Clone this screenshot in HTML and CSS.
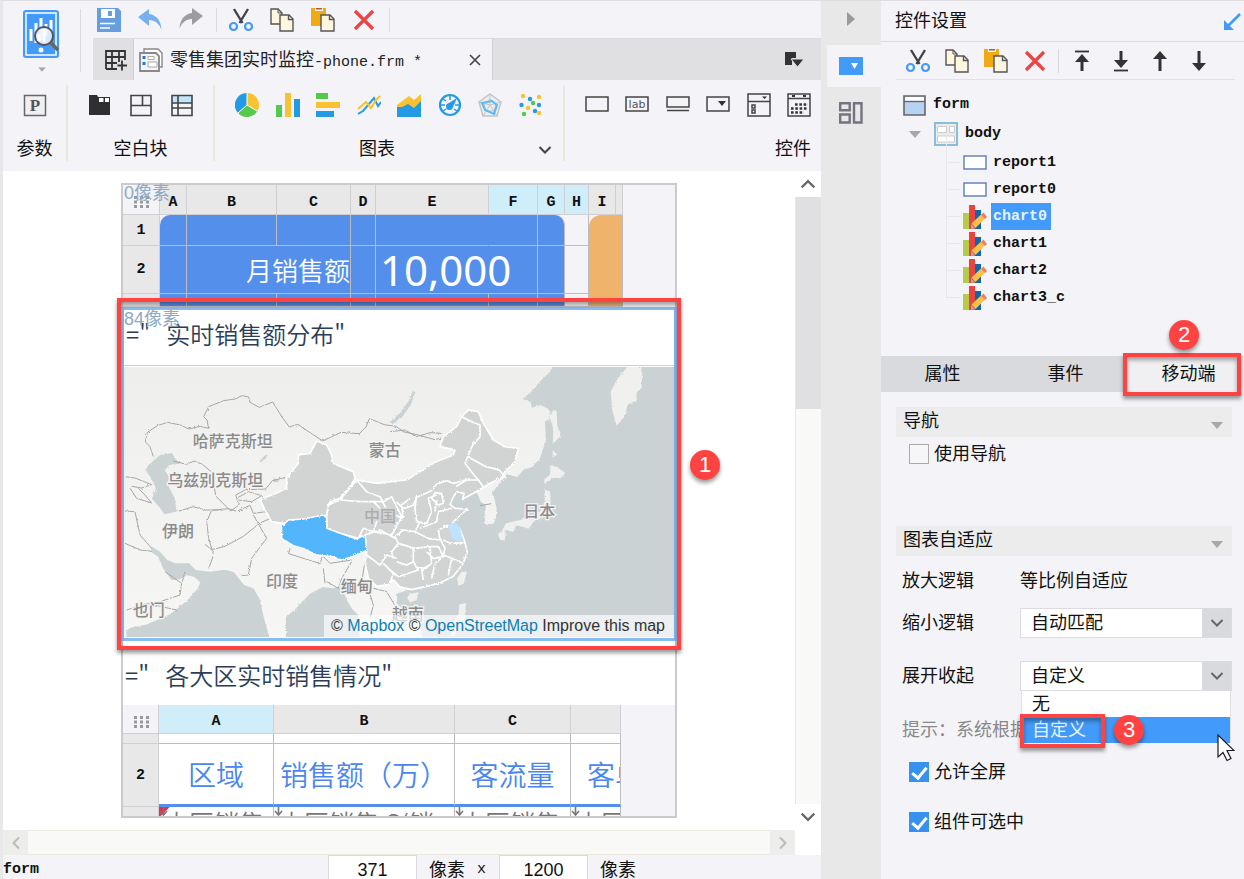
FILE: index.html
```html
<!DOCTYPE html>
<html lang="zh-CN">
<head>
<meta charset="utf-8">
<title>零售集团实时监控-phone.frm</title>
<link rel="stylesheet" href="styles.css">
</head>
<body>
<svg class="sprite" aria-hidden="true">
  <symbol id="i-cut" viewBox="0 0 24 24">
    <path d="M5 1l8.500 14M19 1l-8.500 14" stroke="#444" stroke-width="2.400" fill="none"/>
    <circle cx="4.500" cy="18.500" r="3.500" fill="none" stroke="#429afa" stroke-width="2.200"/>
    <circle cx="19.500" cy="18.500" r="3.500" fill="none" stroke="#429afa" stroke-width="2.200"/>
  </symbol>
  <symbol id="i-copy" viewBox="0 0 24 24">
    <path d="M1 1h7l4 4v11H1z" fill="#fff6e0" stroke="#555" stroke-width="1.400"/><path d="M8 1v4h4" fill="none" stroke="#555"/>
    <path d="M10 7h9l4 4v12H10z" fill="#fff6e0" stroke="#555" stroke-width="1.400"/><path d="M18.500 7v4.500H23" fill="none" stroke="#555" stroke-width="1.400"/>
  </symbol>
  <symbol id="i-paste" viewBox="0 0 24 24">
    <path d="M0 0h15v18H0z" fill="#f0aa14"/><path d="M4 0h8v3H4z" fill="#fff"/><path d="M5 0h6v1.500H5z" fill="#c4512a"/>
    <path d="M10 7h9l4 4v12H10z" fill="#fff6e0" stroke="#555" stroke-width="1.400"/><path d="M18.500 7v4.500H23" fill="none" stroke="#555" stroke-width="1.400"/>
  </symbol>
  <symbol id="i-del" viewBox="0 0 24 24"><path d="M3 3l18 18M21 3L3 21" stroke="#ec4343" stroke-width="3.200" fill="none"/></symbol>
  <symbol id="i-chart" viewBox="0 0 24 24">
    <path d="M0 8h6v16H0z" fill="#b4cb4c"/><path d="M6 0h6v24H6z" fill="#e9443e"/><path d="M12 5h6v19h-6z" fill="#1166ad"/>
    <path d="M8 24v-5l4 4.500z" fill="#a9acb5"/>
    <path d="M8.500 18.500L18 9.500l4 4L12.500 23z" fill="#fbc14c"/><path d="M18 10l2.500-2.500 3.500 4.500-2 2z" fill="#ef7f5c"/>
  </symbol>
  <symbol id="i-down" viewBox="0 0 14 10"><path d="M1.500 2L7 7.500 12.500 2" fill="none" stroke="currentColor" stroke-width="2"/></symbol>
  <symbol id="i-tri" viewBox="0 0 12 7"><path d="M0 0h12L6 7z" fill="#a8a8aa"/></symbol>
  <symbol id="i-grip" viewBox="0 0 16 12"><path d="M1 0h3v3H1zM7 0h3v3H7zM13 0h3v3h-3zM1 4.500h3v3H1zM7 4.500h3v3H7zM13 4.500h3v3h-3zM1 9h3v3H1zM7 9h3v3H7zM13 9h3v3h-3z" fill="#999"/></symbol>
  <symbol id="i-grow" viewBox="0 0 9 9"><path d="M4.500 0v7M1 4l3.500 4L8 4" fill="none" stroke="#777" stroke-width="1.600"/></symbol>
</svg>

<div class="app">
<main class="work">
  <header class="head">
    <button class="brand" aria-label="预览">
      <svg width="37" height="49" viewBox="0 0 37 49"><rect width="36" height="48" rx="3" fill="#429afa"/><rect x="3" y="3" width="30" height="42" fill="none" stroke="#fff" stroke-width="1.500"/><path d="M8 19v12M13 13v20M18 8v22M23 14v12M28 10v12" stroke="#fff" stroke-width="3"/><circle cx="18" cy="40" r="2.500" fill="#fff"/><circle cx="21" cy="26" r="9" fill="#eaf3ff" fill-opacity=".9" stroke="#555" stroke-width="2"/><path d="M21 19v13M16 24v7" stroke="#fff" stroke-width="3"/><path d="M28 33l7 7" stroke="#666" stroke-width="3.500"/></svg>
      <svg class="brand-more" width="8" height="5" viewBox="0 0 12 7"><use href="#i-tri"/></svg>
    </button>
    <div class="head-main">
      <div class="quick">
        <div class="quick-group">
          <button class="ico" aria-label="保存"><svg viewBox="0 0 24 24"><path d="M0 0h21l3 3v21H0z" fill="#669fe0"/><path d="M4 1h14v9H4z" fill="#fff"/><path d="M11 3h4v5h-4z" fill="#669fe0"/><path d="M3 15.500h15M3 20h10" stroke="#fff" stroke-width="1.500"/></svg></button>
          <button class="ico" aria-label="撤销"><svg viewBox="0 0 24 24"><path d="M0 9l11-8v5c8 1 12 7 12.500 16C21 15 17 12.500 11 12v6z" fill="#77b0ee"/></svg></button>
          <button class="ico" aria-label="重做"><svg viewBox="0 0 24 24"><path d="M24 8L13 0v5C5 6 1 12 .5 21 3 14 7 11.500 13 11v6z" fill="#9d9d9f"/></svg></button>
        </div>
        <div class="quick-group">
          <button class="ico" aria-label="剪切"><svg><use href="#i-cut"/></svg></button>
          <button class="ico" aria-label="复制"><svg><use href="#i-copy"/></svg></button>
          <button class="ico" aria-label="粘贴"><svg><use href="#i-paste"/></svg></button>
          <button class="ico" aria-label="删除"><svg><use href="#i-del"/></svg></button>
        </div>
      </div>
      <nav class="files">
        <button class="newfile" aria-label="新建"><svg width="22" height="22" viewBox="0 0 22 22"><path d="M1 20V2h19v9M1 8h19M1 14h11M1 20h11M7 2v18M14 2v11M12.500 16.500H22M17 11.500v10" fill="none" stroke="#333" stroke-width="1.800"/></svg></button>
        <div class="file">
          <svg width="24" height="24" viewBox="0 0 24 24"><path d="M5 5V1h14l4 4v14h-3" fill="#fff" stroke="#888" stroke-width="1.400"/><path d="M1 5h16l3 3v15H1z" fill="#f4f4f6" stroke="#888" stroke-width="1.800"/><path d="M3.500 8h3v3h-3zM3.500 14h3v3h-3z" fill="#2478d0"/><path d="M9 8.500h6v3H9zM9 14h9v5H9z" fill="#fff" stroke="#aaa"/></svg>
          <span class="file-name">零售集团实时监控<span class="mono">-phone.frm *</span></span>
          <button class="close" aria-label="关闭"><svg width="12" height="12" viewBox="0 0 12 12"><path d="M1 1l10 10M11 1L1 11" stroke="#444" stroke-width="1.600"/></svg></button>
        </div>
        <button class="filelist" aria-label="文件列表"><svg width="19" height="16" viewBox="0 0 19 16"><path d="M0 0h11v6H7v7H0z" fill="#333"/><path d="M6 7h13l-6.500 8z" fill="#333" stroke="#e0e0e2"/></svg></button>
      </nav>
    </div>
  </header>

  <section class="ribbon">
    <div class="rgroup params">
      <div class="rtools"><button class="ico" aria-label="参数"><svg viewBox="0 0 24 24"><rect x="1.500" y="2.500" width="21" height="20" fill="#f0f0f2" stroke="#666" stroke-width="1.500"/><text x="12" y="18" class="p-glyph">P</text></svg></button></div>
      <div class="rlabel">参数</div>
    </div>
    <div class="rgroup blocks">
      <div class="rtools">
        <button class="ico" aria-label="报表块"><svg viewBox="0 0 24 24"><path d="M1 2h8l1 2h12v18H1z" fill="#2f2f31"/><path d="M11 5h4.500v4H11zM17 5h4v4h-4z" fill="#fff"/></svg></button>
        <button class="ico" aria-label="绝对画布块"><svg viewBox="0 0 24 24"><path d="M2 2.500h20v20H2zM2 12.500h20M13.500 2.500v10" fill="none" stroke="#444" stroke-width="1.600"/></svg></button>
        <button class="ico" aria-label="tab块"><svg viewBox="0 0 24 24"><path d="M2 3h20v7H2z" fill="#bfe6fa"/><path d="M2 2.500h20v20H2zM2 10h20M2 15h20M8 2.500v20" fill="none" stroke="#444" stroke-width="1.600"/></svg></button>
      </div>
      <div class="rlabel">空白块</div>
    </div>
    <div class="rgroup charts">
      <div class="rtools">
        <button class="ico" aria-label="饼图"><svg viewBox="0 0 24 24"><path d="M12 12V0a12 12 0 0 1 10.400 18z" fill="#f9c232"/><path d="M12 12l10.400 6A12 12 0 0 1 3 20z" fill="#54c94b"/><path d="M12 12l-9 8A12 12 0 0 1 12 0z" fill="#229ae4"/><path d="M12 0v12l10 6M12 12l-9 8" stroke="#fff" fill="none"/></svg></button>
        <button class="ico" aria-label="柱形图"><svg viewBox="0 0 24 24"><path d="M0 12h6v12H0z" fill="#54c94b"/><path d="M9 0h6v24H9z" fill="#f9c232"/><path d="M18 6h6v18h-6z" fill="#229ae4"/></svg></button>
        <button class="ico" aria-label="条形图"><svg viewBox="0 0 24 24"><path d="M0 0h12v6H0z" fill="#54c94b"/><path d="M0 9h24v6H0z" fill="#f9c232"/><path d="M0 18h18v6H0z" fill="#229ae4"/></svg></button>
        <button class="ico" aria-label="折线图"><svg viewBox="0 0 24 24"><path d="M1 21l5-3 11-13 4 8 3-4" fill="none" stroke="#229ae4" stroke-width="2"/><path d="M1 16l8-7 5 6 5-8 4-4" fill="none" stroke="#f9c232" stroke-width="2"/></svg></button>
        <button class="ico" aria-label="面积图"><svg viewBox="0 0 24 24"><path d="M0 12l12-9 5 4 7-6v15H0z" fill="#f9c232"/><path d="M0 14h5l6-3 6 4 7-7v16H0z" fill="#229ae4"/></svg></button>
        <button class="ico" aria-label="仪表盘"><svg viewBox="0 0 24 24"><circle cx="12" cy="12" r="10" fill="none" stroke="#229ae4" stroke-width="2.200"/><path d="M12 2v5M3 12h4M17 12h4M5 6l3 2M5 18l3-2M19 18l-3-2" stroke="#229ae4" stroke-width="1.500"/><path d="M19 5l-4 9a3.500 3.500 0 1 1-4-4z" fill="#229ae4"/></svg></button>
        <button class="ico" aria-label="雷达图"><svg viewBox="0 0 24 24"><path d="M12 1l11 8-4 14H5L1 9z" fill="#eee" stroke="#c4c4c8" stroke-width="1.500"/><path d="M12 6l6 5-2 7H8l-2-7zM12 1v11l11-3M12 12l7 11M12 12L5 23M12 12L1 9" fill="none" stroke="#c4c4c8"/><path d="M4 10l10-2 5 4-3 9-9-4z" fill="none" stroke="#5bb9f5" stroke-width="2"/></svg></button>
        <button class="ico" aria-label="散点图"><svg viewBox="0 0 24 24"><g fill="#f9c232"><circle cx="4" cy="3" r="2.200"/><circle cx="20" cy="4" r="2.200"/><circle cx="9" cy="15" r="2.200"/><circle cx="20" cy="20" r="2.200"/></g><g fill="#229ae4"><circle cx="11" cy="6" r="2.200"/><circle cx="2.500" cy="12" r="2.200"/><circle cx="20" cy="12" r="2.200"/><circle cx="16" cy="18" r="2.200"/></g><g fill="#54c94b"><circle cx="14" cy="10" r="2.200"/><circle cx="5" cy="21" r="2.200"/></g></svg></button>
      </div>
      <div class="rlabel">图表</div>
      <button class="rmore" aria-label="更多图表"><svg width="14" height="10"><use href="#i-down"/></svg></button>
    </div>
    <div class="rgroup widgets">
      <div class="rtools">
        <button class="ico" aria-label="文本框"><svg viewBox="0 0 24 24"><path d="M1 4h22v14H1z" fill="none" stroke="#444" stroke-width="1.500"/></svg></button>
        <button class="ico" aria-label="标签"><svg viewBox="0 0 24 24"><path d="M1 4h22v14H1z" fill="none" stroke="#444" stroke-width="1.500"/><text x="12" y="15" class="lab-glyph">lab</text></svg></button>
        <button class="ico" aria-label="按钮"><svg viewBox="0 0 24 24"><path d="M1 4h22v10H1zM1 17.500h22" fill="none" stroke="#444" stroke-width="1.500"/></svg></button>
        <button class="ico" aria-label="下拉框"><svg viewBox="0 0 24 24"><path d="M1 4h22v14H1z" fill="none" stroke="#444" stroke-width="1.500"/><path d="M12 8h8l-4 5z" fill="#333"/></svg></button>
        <button class="ico" aria-label="下拉复选框"><svg viewBox="0 0 24 24"><path d="M1 1h22v22H1zM1 8.500h22M5 12h3v3H5zM5 17h3v3H5z" fill="none" stroke="#444" stroke-width="1.500"/><path d="M15 3.500h5L17.500 6z" fill="#333"/></svg></button>
        <button class="ico" aria-label="日期"><svg viewBox="0 0 24 24"><path d="M1 1h22v22H1zM1 5.500h22" fill="none" stroke="#444" stroke-width="1.500"/><path d="M8 11.500h13M4 15.500h17M4 19.500h13" stroke="#333" stroke-width="2.600" stroke-dasharray="2.600 1.700"/><path d="M5 2h3v2H5zM16 2h3v2h-3z" fill="#333"/></svg></button>
      </div>
      <div class="rlabel">控件</div>
    </div>
  </section>

  <div class="stage">
    <div class="canvas">
      <div class="form">
        <section class="sheet">
          <span class="px-tag">0像素</span>
          <table class="grid grid-a">
            <colgroup><col class="w37"><col class="w27"><col class="w90"><col class="w74"><col class="w25"><col class="w113"><col class="w49"><col class="w27"><col class="w24"><col class="w27"><col class="w7"></colgroup>
            <thead><tr><th class="corner"><svg width="16" height="12"><use href="#i-grip"/></svg></th><th>A</th><th>B</th><th>C</th><th>D</th><th>E</th><th class="on">F</th><th class="on">G</th><th class="on">H</th><th>I</th><th></th></tr></thead>
            <tbody>
              <tr class="r1"><th>1</th><td class="blue tl"></td><td class="blue"></td><td class="blue"></td><td class="blue"></td><td class="blue flat"></td><td class="blue"></td><td class="blue tr"></td><td></td><td class="orange tl2"></td><td class="orange"></td></tr>
              <tr class="r2"><th>2</th><td class="blue"></td><td class="blue kpi-name" colspan="2">月销售额</td><td class="blue"></td><td class="blue kpi" colspan="2">10,000</td><td class="blue"></td><td></td><td class="orange"></td><td class="orange"></td></tr>
              <tr class="r3"><th></th><td class="blue"></td><td class="blue"></td><td class="blue"></td><td class="blue"></td><td class="blue"></td><td class="blue"></td><td class="blue"></td><td></td><td class="orange"></td><td class="orange"></td></tr>
            </tbody>
          </table>
        </section>

        <section class="mapbox">
          <span class="px-tag">84像素</span>
          <h2 class="formula">="   实时销售额分布"</h2>
          <div class="map">
            <svg viewBox="42 36 1650 810" role="img" aria-label="地图">
              <defs><filter id="rough" x="-5%" y="-5%" width="110%" height="110%"><feTurbulence type="fractalNoise" baseFrequency=".14" numOctaves="2" seed="4"/><feDisplacementMap in="SourceGraphic" scale="8"/></filter>
              <linearGradient id="relief" x2="0" y2="1"><stop offset="0" stop-color="#eeeeed"/><stop offset=".3" stop-color="#f1f1f0"/><stop offset="1" stop-color="#f6f6f5"/></linearGradient></defs>
              <rect x="42" y="36" width="1650" height="810" fill="url(#relief)"/>
              <g filter="url(#rough)">
                <g fill="#cad2d3">
                  <path d="M1332 20L1320 50 1285 85 1275 100 1238 132 1262 140 1265 158 1290 150 1312 160 1322 172 1318 190 1305 200 1308 255 1290 310 1268 335 1240 345 1222 366 1190 358 1180 372 1160 395 1147 415 1152 428 1160 460 1158 490 1150 506 1125 508 1124 470 1128 452 1112 440 1104 420 1095 405 1065 430 1055 435 1064 415 1040 410 1028 430 1020 450 1035 458 1072 460 1050 480 1028 500 1050 520 1065 560 1072 590 1060 622 1045 645 1020 665 990 682 950 692 905 700 875 712 862 715 860 745 885 770 925 790 940 860 1720 860V20z"/>
                  <path d="M106 345l10-15 34-30 36-6 8 14 16 18-32 4-14 16 12 18-2 26 20 40 6 40-36 8-16-22-22-25 12-30-15-32z"/>
                  <path d="M122 574l28 16 22 25 23 10 42 0 20 20 43 5 46-6 26 8 30 38 28 10 18 30 14 60 20 70H160l-8-14-100 16-4-34 14-10 50-10 68-30 50-40 34-38 7-18-18-16-22-6-18 12-28 4-26-36-14-34-20-14z"/>
                  <path d="M528 860v-74l24-20 48-50 38-20 30 4 24-5 22 46 12 20 18 18 6 81z"/>
                  <path d="M840 202l30-28 26-36 12-30 8 4-14 38-24 34-30 24zM448 320l10-14 14-8-4 12-16 12zM490 370l18 4-4 8-14-2z"/>
                </g>
                <g fill="#f0f0ef">
                  <path d="M1552 36h42l2 34-2 30-14 12v24l-26 12-10 34-24 30-12-42-6-60 20-38zM1330 165l10 4 2 44 12 28-26 26 2-36-4-30-8-12zM1328 285l14 14-14 8zM1322 330l20 6 24 18-14 16-22-2-26 18-2-12 18-16zM1305 405l15 4 2 36-12 34-20 12-20 10-14 20-18-6-20-4-8 20-20-6-16 6 14-26 42-10 38-10 26-20 10-26zM1170 530l18 0-4 26-12 0-7-14zM1055 650l16 0-10 36-16 6-4-22zM1048 748l20-4-4 48-20 10-8 40h-14l8-40 16-26zM900 716l26-4-6 24-20 6-9-14z"/>
                </g>
                <g fill="none" stroke="#a6a6a6" stroke-width="3">
                  <path d="M130 305l-10-30-14-15 6-28 30-20 30-10 40 8 24 12 35-8 25 6-5-25-10-10 15-30 45-18 35-5 20-10 20 4 4 16 28 15 40-16 28 45 22 30 25-8 45 30 30 20 55-26 55 4 20-20 10-25 45 18 35 5 22 16 45 10 50 14 55-16"/>
                  <path d="M190 318l40 10 22-10 25 10 30 25 10 70 45 45 25-18-10-30 30-16 60-2 20-25 40-10M340 465l-55 0-35-10-45 14M290 500l6 50 15 50-15 40M290 500l15-34 50-5 25 8 40-18 10 24 40-5 25 14-45 20-50 40-55 30-40 10-20-16M380 430l35-20 40 12-30 18-40-5M430 480l40 70-45 60-10 50-20 2M45 365l30 4 50 20-30 10-30-5M60 400l20 30 45 14-20-24-20-20M45 468l30 2 15 70 35 40M45 565l45 20 36 4M165 650l50 35-5 35-60 20M50 765l60-20 90 20M225 650l-8 30M540 580l-4 16 95 30 5-20M640 605l20 20 65-10M640 640l5 45M725 620l-30 50-10 30-35-20M765 620l-10 60 20 20 15 50-10 40M790 700l40 10 30 50M840 230l45-5 35 20 40-12 35 2M1110 452l34-6"/>
                </g>
                <g fill="#d2d3d3" stroke="#fff" stroke-width="5" stroke-linejoin="round">
                  <path d="M740 375l60 10 60-7 30-3 40-25 45-28 55-22 5-15-45-10 10-30 40-30 15-30 20-20 30 5 15 35 30 50 35 20 40 5-10 40-30 30-10 18-35 17-22 13-28 17-32 18 4-18-22-5-12 20-8 18 15 12 37 2-22 20-22 20 22 20 15 40 7 30-14 36-28 36-40 20-40 10-45 10-35-8-20-22-15 15-35 5-25-25-10-45 5-35-5-45-75-5-40-15 5-70 35-20 30-35z"/>
                  <path d="M620 258l30 12 15 30 3 25 62 25 5 20-15 25-30 35-30 10-10 40-70 12-60 14-35-6-17-30-18-36 50-20 30-14 0-30 35-45 0-25 35-5z"/>
                  <path d="M650 480l5-30 35-15 60 5 40 0 25 25-15 35-10 30-30-10-15 30-55-15-40-15z"/>
                </g>
                <path d="M1015 510l18-8 18 18 8 32-16 8-18-12-6-22z" fill="#bfe3ff"/>
                <path d="M515 515l20-20 45-3 60-12 10 10v30l40 15 50 17 25-12 5 45-30 15-45 15-25-10-50-5-40-20-30-8-35-22z" fill="#53b6fc" stroke="#fff" stroke-width="4"/>
                <g fill="none" stroke="#fff" stroke-width="5" stroke-linejoin="round">
                  <path d="M1055 185l30 15 25 10 0 35-22 25-15 35 55 30 40 10 20 25M1073 305l-8 20 15 20 25 30 15 20M1080 370l-30 10-20 5-20-8-30 10-15 20-45 20-10 24-30 10-20-20M1110 375l-40 0-32 20"/>
                  <path d="M740 375l30 35 40 15 20 40 20 30 10 20-15 25-55-10M790 440l30 0 25-15 30 60-10 20-20-5M830 470l50 20-5-40 25-20M920 420l-5 40 5 40 30 5 15-35-10-40 25-10M965 430l20 20 15-5-5-30-20-2-10 17M985 470l40-10M985 470l-5 30-50 20M930 500l-15 30 40 20 35 5-5-30 30-15M915 530l-35-5-25 20 10 20-20 25 5 20M865 565l50 15 45-5 25 0 15 30-30 5-20-20M910 580l0 40-20 10-30-10M960 575l5 50-20 15-30-5M1000 555l20 10 40-2M990 550l15 30-5 20 25 10 35 15M1000 605l-25 20-10 45M1025 610l-10 50M965 625l-30 20 5 30M910 620l15 25-60 20-25-20M770 600l40 30 20-30 30 10M820 625l30 30-10 30M765 540l45-15 45 25M975 470l5-35"/>
                </g>
              </g>
              <g class="places">
                <text x="248" y="277">哈萨克斯坦</text><text x="172" y="394">乌兹别克斯坦</text><text x="156" y="546">伊朗</text>
                <text x="468" y="697">印度</text><text x="692" y="711">缅甸</text><text x="68" y="782">也门</text>
                <text x="776" y="304">蒙古</text><text x="762" y="502" class="dim">中国</text><text x="1240" y="487">日本</text><text x="845" y="796">越南</text>
              </g>
            </svg>
            <p class="credit">© <a href="#">Mapbox</a> © <a href="#">OpenStreetMap</a> Improve this map</p>
          </div>
          <span class="mark mark-map"></span>
          <span class="step step-1">1</span>
        </section>

        <section class="sheet">
          <h2 class="formula second">="   各大区实时销售情况"</h2>
          <table class="grid grid-b">
            <colgroup><col class="w36"><col class="w115"><col class="w181"><col class="w116"><col class="w50"></colgroup>
            <thead><tr><th class="corner"><svg width="16" height="12"><use href="#i-grip"/></svg></th><th class="on">A</th><th>B</th><th>C</th><th></th></tr></thead>
            <tbody>
              <tr class="b1"><th></th><td></td><td></td><td></td><td></td></tr>
              <tr class="b2"><th>2</th><td>区域</td><td>销售额（万）</td><td>客流量</td><td class="cut"><div>客单价</div></td></tr>
              <tr class="b3"><th></th><td class="flag"><div><svg width="9" height="9"><use href="#i-grow"/></svg>大区销售</div></td><td><div><svg width="9" height="9"><use href="#i-grow"/></svg>大区销售.S(销</div></td><td><div><svg width="9" height="9"><use href="#i-grow"/></svg>大区销售</div></td><td><div><svg width="9" height="9"><use href="#i-grow"/></svg>大区</div></td></tr>
            </tbody>
          </table>
        </section>
      </div>
    </div>
    <div class="vbar">
      <button aria-label="向上"><svg class="up" width="16" height="12" viewBox="0 0 14 10"><use href="#i-down"/></svg></button>
      <div class="vtrack"><div class="vthumb"></div></div>
      <button aria-label="向下"><svg width="16" height="12" viewBox="0 0 14 10"><use href="#i-down"/></svg></button>
    </div>
  </div>
  <div class="hbar">
    <button aria-label="向左"><svg class="left" width="14" height="10"><use href="#i-down"/></svg></button>
    <div class="htrack"></div>
    <button aria-label="向右"><svg class="right" width="14" height="10"><use href="#i-down"/></svg></button>
    <div class="hend"></div>
  </div>
  <footer class="status">
    <span class="mono strong name">form</span>
    <input aria-label="宽度" value="371"><span class="unit">像素</span><span class="mono times">x</span>
    <input aria-label="高度" value="1200"><span class="unit">像素</span>
  </footer>
</main>

<nav class="rail">
  <button class="fold" aria-label="收起"><svg width="8" height="14" viewBox="0 0 8 14"><path d="M0 0l8 7-8 7z" fill="#999"/></svg></button>
  <button class="rail-on" aria-label="控件设置"><svg width="24" height="18" viewBox="0 0 24 18"><path d="M0 0h24v18H0z" fill="#429afa"/><path d="M12 6h7l-3.500 6z" fill="#fff"/></svg></button>
  <button class="rail-off" aria-label="组件"><svg width="24" height="22" viewBox="0 0 24 22"><path d="M1.200 1.200h9.500v7H1.200zM1.200 12.500h9.500v8H1.200zM15 1.200h7.500v19.300H15z" fill="none" stroke="#747480" stroke-width="2.400"/></svg></button>
</nav>

<aside class="side">
  <header class="side-head"><h1>控件设置</h1><button aria-label="弹出"><svg width="17" height="17" viewBox="0 0 17 17"><path d="M16 1L4 13" stroke="#429afa" stroke-width="2.600"/><path d="M0 7v10h10z" fill="#429afa"/></svg></button></header>
  <div class="side-tools">
    <button class="ico" aria-label="剪切"><svg><use href="#i-cut"/></svg></button>
    <button class="ico" aria-label="复制"><svg><use href="#i-copy"/></svg></button>
    <button class="ico" aria-label="粘贴"><svg><use href="#i-paste"/></svg></button>
    <button class="ico" aria-label="删除"><svg><use href="#i-del"/></svg></button>
    <i class="bar"></i>
    <button class="ico" aria-label="置顶"><svg viewBox="0 0 24 24"><path d="M5 2.500h14" stroke="#333" stroke-width="1.800"/><path d="M12 5l7 8h-5.500v9h-3v-9H5z" fill="#333"/></svg></button>
    <button class="ico" aria-label="置底"><svg viewBox="0 0 24 24"><path d="M5 21.500h14" stroke="#333" stroke-width="1.800"/><path d="M12 19l7-8h-5.500V2h-3v9H5z" fill="#333"/></svg></button>
    <button class="ico" aria-label="上移"><svg viewBox="0 0 24 24"><path d="M12 2l7 8h-5.500v12h-3V10H5z" fill="#333"/></svg></button>
    <button class="ico" aria-label="下移"><svg viewBox="0 0 24 24"><path d="M12 22l7-8h-5.500V2h-3v12H5z" fill="#333"/></svg></button>
  </div>
  <ul class="tree mono strong">
    <li class="t0"><svg width="24" height="21" viewBox="0 0 24 21"><path d="M1 1h21v19H1z" fill="#b8d2f4" stroke="#666" stroke-width="1.600"/><path d="M2 2h19v4H2z" fill="#fff"/><path d="M1 6.500h21" stroke="#666" stroke-width="1.400"/></svg>form</li>
    <li class="t1"><svg class="twig" width="12" height="7"><use href="#i-tri"/></svg><svg width="24" height="24" viewBox="0 0 24 24"><path d="M1 1h22v22H1z" fill="#ececec" stroke="#88bedb" stroke-width="2"/><path d="M3.500 4.500h9v6h-9zM15.500 4.500h5v6h-5zM3.500 14h17v6h-17z" fill="#fff" stroke="#ccc"/></svg>body</li>
    <li class="t2"><svg width="24" height="15" viewBox="0 0 24 15"><path d="M1 1h22v13H1z" fill="#fff" stroke="#6884b8" stroke-width="1.500"/></svg><span>report1</span></li>
    <li class="t2"><svg width="24" height="15" viewBox="0 0 24 15"><path d="M1 1h22v13H1z" fill="#fff" stroke="#6884b8" stroke-width="1.500"/></svg><span>report0</span></li>
    <li class="t2"><svg width="24" height="24"><use href="#i-chart"/></svg><span class="picked">chart0</span></li>
    <li class="t2"><svg width="24" height="24"><use href="#i-chart"/></svg><span>chart1</span></li>
    <li class="t2"><svg width="24" height="24"><use href="#i-chart"/></svg><span>chart2</span></li>
    <li class="t2"><svg width="24" height="24"><use href="#i-chart"/></svg><span>chart3_c</span></li>
  </ul>
  <div class="tabs-wrap">
    <div class="tabs" role="tablist">
      <button role="tab">属性</button><button role="tab">事件</button><button role="tab" class="tab-on" aria-selected="true">移动端</button>
    </div>
    <span class="mark mark-tab"></span><span class="step step-2">2</span>
  </div>
  <div class="props">
    <h2 class="bar-title">导航<svg width="12" height="7"><use href="#i-tri"/></svg></h2>
    <label class="check nav-check"><input type="checkbox">使用导航</label>
    <h2 class="bar-title">图表自适应<svg width="12" height="7"><use href="#i-tri"/></svg></h2>
    <div class="prop"><span>放大逻辑</span><span>等比例自适应</span></div>
    <div class="prop"><label for="shrink">缩小逻辑</label>
      <div class="combo"><select id="shrink"><option>自动匹配</option></select><svg width="14" height="10"><use href="#i-down"/></svg></div></div>
    <div class="prop expand"><label for="expand">展开收起</label>
      <div class="combo"><select id="expand"><option>自定义</option><option>无</option></select><svg width="14" height="10"><use href="#i-down"/></svg>
        <ul class="menu" role="listbox"><li role="option">无</li><li role="option" class="hot" aria-selected="true">自定义</li></ul>
        <span class="mark mark-opt"></span><span class="step step-3">3</span>
        <svg class="cursor" width="18" height="28" viewBox="0 0 18 28"><path d="M1 1v22l5-4.500 4 8 4-2-4-8h7z" fill="#fff" stroke="#1a1a2a" stroke-width="1.200"/></svg>
      </div></div>
    <p class="hint">提示：系统根据</p>
    <label class="check"><input type="checkbox" checked>允许全屏</label>
    <label class="check"><input type="checkbox" checked>组件可选中</label>
  </div>
</aside>
</div>
</body>
</html>
```
FILE: styles.css
```css
* { box-sizing: border-box; }
body {
  margin: 0;
  font: 18px/24px "Liberation Sans", "Noto Sans CJK SC", sans-serif;
  color: #111;
  background: #f4f4f8;
}
button, input, select { font: inherit; color: inherit; }
button { border: 0; padding: 0; background: none; display: flex; align-items: center; justify-content: center; }
h1, h2, p, ul { margin: 0; padding: 0; font-size: 18px; font-weight: 400; list-style: none; }
svg { display: block; flex: none; }
.sprite { position: absolute; width: 0; height: 0; }
.mono { font-family: "Liberation Mono", monospace; font-size: 15px; }
.strong { font-weight: 700; }
.ico, .ico svg { width: 24px; height: 24px; }

.app { display: flex; height: 100vh; overflow: hidden; border-top: 1px solid #dedee0; border-left: 3px solid #e8e8ea; }
.work { flex: 1; min-width: 0; display: flex; flex-direction: column; }

/* header */
.head { display: flex; height: 79px; }
.brand { width: 78px; margin: 8px 12px 8px 0; border-right: 1px solid #dcdce0; flex-direction: column; gap: 8px; }
.head-main { flex: 1; min-width: 0; display: flex; flex-direction: column; }
.quick { display: flex; height: 37px; padding-left: 4px; align-items: center; }
.quick-group { display: flex; gap: 17px; padding-right: 13px; margin-right: 12px; border-right: 1px solid #dcdce0; }
.files { flex: 1; display: flex; background: #e0e0e2; border-top: 1px solid #dcdce0; }
.newfile { width: 41px; padding-left: 6px; border-right: 1px solid #cfcfd2; }
.file { display: flex; align-items: center; width: 359px; padding: 0 11px 0 5px; gap: 7px; background: #f4f4f8; border-right: 1px solid #d0d0d3; }
.file-name { flex: 1; padding-top: 4px; white-space: nowrap; color: #222; }
.filelist { margin-left: auto; padding-right: 17px; }

/* ribbon */
.ribbon { display: flex; height: 91px; padding: 5px 0 10px; }
.rgroup { position: relative; display: flex; flex-direction: column; align-items: center; padding-top: 8px; gap: 20px; border-right: 2px solid #eae8dd; }
.rtools { display: flex; justify-content: space-between; }
.params { width: 65px; }
.blocks { width: 147px; }
.blocks .rtools { width: 106px; }
.charts { width: 350px; padding-left: 20px; padding-right: 20px; }
.charts .rtools { width: 100%; }
.widgets { flex: 1; border: 0; padding-left: 20px; padding-right: 10px; }
.widgets .rtools { align-self: stretch; }
.widgets .rlabel { align-self: flex-end; }
.charts .rlabel { padding-right: 24px; }
.rmore { position: absolute; right: 11px; bottom: 6px; color: #444; }
.p-glyph { font: bold 17px "Liberation Serif", serif; fill: #555; text-anchor: middle; }
.lab-glyph { font: 11px "DejaVu Sans", sans-serif; fill: #555; text-anchor: middle; }

/* canvas */
.stage { flex: 1; min-height: 0; display: flex; background: #fff; }
.canvas { flex: 1; overflow: hidden; padding-top: 12px; }
.form { width: 556px; margin: 0 auto; border: 2px solid #cbcbcd; background: #f4f4f8; }
.sheet { position: relative; }
.px-tag { position: absolute; left: 1px; top: -2px; line-height: 20px; color: #8faac4; z-index: 1; }
.grid { table-layout: fixed; border-collapse: separate; border-spacing: 0; width: 500px; }
.grid-b { width: 498px; }
.grid th, .grid td { padding: 0; border: solid #bdbdc0; border-width: 0 1px 1px 0; overflow: hidden; white-space: nowrap; line-height: 1; }
.grid th { background: #e8e8e8; border-color: #d0d0d4; font: bold 15px "Liberation Mono", monospace; }
.grid thead th { padding-top: 5px; }
.grid th.on { background: #cfeefa; }
.grid th.corner { background: #f4f4f8; }
.corner svg { margin: auto; }
.grid thead tr { height: 30px; }
.w37 { width: 37px; } .w27 { width: 27px; } .w90 { width: 90px; } .w74 { width: 74px; } .w25 { width: 25px; }
.w113 { width: 113px; } .w49 { width: 49px; } .w24 { width: 24px; } .w7 { width: 7px; }
.w36 { width: 36px; } .w115 { width: 115px; } .w181 { width: 181px; } .w116 { width: 116px; } .w50 { width: 50px; }
.r1 { height: 31px; } .r2 { height: 48px; } .r3 { height: 13px; }
.grid .blue { background: #558fec; color: #fff; }
.grid .orange { background: #f0b36b; }
.grid .flat { border-right-color: #558fec; }
.tl { border-top-left-radius: 10px; }
.tr { border-top-right-radius: 10px; }
.tl2 { border-top-left-radius: 12px; }
.grid .kpi-name { font: 350 26px/1 "Noto Sans CJK SC", sans-serif; text-align: right; }
.grid .kpi { font: 42px/1 "Noto Sans", "Open Sans", sans-serif; padding-left: 4px; }

.mapbox { position: relative; margin: 0 -2px; border: 3px solid #88bbf0; background: #fff; }
.mapbox .px-tag { top: -1px; left: 0; }
.formula { height: 56px; padding: 0 2px; font: 350 24px/48px "Noto Sans CJK SC", sans-serif; color: #2c3e56; white-space: pre; border-bottom: 1px solid #d0d0d0; }
.second { height: 64px; line-height: 68px; background: #fff; border: 0; }
.map { position: relative; margin: 1px 0; }
.map svg { width: 100%; height: auto; }
.places { font: 500 48px "Noto Sans CJK SC", sans-serif; fill: #8b8b8b; stroke: #f3f3f2; stroke-width: 8px; paint-order: stroke; }
.places .dim { fill: #adadad; stroke: #d6d6d6; }
.credit { position: absolute; right: 0; bottom: 0; padding: 0 9px 0 7px; font-size: 16px; line-height: 22px; color: #333; background: rgba(255, 255, 255, .65); white-space: nowrap; }
.credit a { color: #0e7fb4; text-decoration: none; }

.grid-b thead tr { height: 29px; }
.b1 { height: 10px; } .b2 { height: 63px; } .b3 { height: 9px; }
.grid-b td { background: #fff; }
.grid-b .b2 td { font: 350 28px/1 "Noto Sans CJK SC", sans-serif; text-align: center; color: #4a86ee; border-bottom: 3px solid #558fec; }
.grid-b .b2 .cut { text-align: left; padding-left: 16px; }
.grid-b .b3 td, .grid-b .b3 th { border-bottom: 0; }
.b3 div { display: flex; height: 9px; overflow: hidden; font: 350 25px/30px "Noto Sans CJK SC", sans-serif; color: #777; }
.b3 svg { margin-right: -4px; }
.grid-b .flag { background: linear-gradient(135deg, #f0284a 7px, #fff 8px); }

/* callouts */
.mark { position: absolute; z-index: 2; border: 4px solid #ff4343; box-shadow: 0 3px 4px rgba(0, 0, 0, .4), inset 0 3px 4px rgba(0, 0, 0, .35); pointer-events: none; }
.mark-map { inset: -12px -7px -12px -7px; }
.mark-tab { left: 242px; right: 3px; top: -3px; height: 43px; }
.mark-opt { left: 0; top: 53px; width: 85px; height: 34px; }
.step { position: absolute; z-index: 3; width: 30px; height: 30px; border-radius: 50%; background: #ff4343; color: #fff; font: 22px/30px "Liberation Sans", sans-serif; text-align: center; box-shadow: 0 3px 4px rgba(0, 0, 0, .4); }
.step-1 { right: -46px; top: 140px; }
.step-2 { left: 288px; top: -36px; }
.step-3 { left: 94px; top: 54px; }

/* scrollbars */
.vbar { width: 26px; display: flex; flex-direction: column; color: #6a6a6a; }
.vbar button { height: 26px; background: #fff; }
.vtrack { flex: 1; background: #f9f9f8; border-left: 1px solid #ebe9dd; }
.vthumb { height: 35%; background: #e0e0e2; }
.up { transform: rotate(180deg); }
.left { transform: rotate(90deg); }
.right { transform: rotate(-90deg); }
.hbar { display: flex; height: 25px; background: #f9f9f8; }
.hbar button { width: 25px; background: #ededec; color: #bbb; }
.htrack { flex: 1; border: solid #ebe9dd; border-width: 1px 0; }
.hend { width: 26px; background: #fff; }
.status { display: flex; align-items: center; height: 24px; overflow: hidden; padding-top: 6px; }
.status .name { flex: 0 0 325px; }
.status input { width: 89px; height: 30px; border: 1px solid #dcdce0; background: #fff; text-align: center; padding: 0; }
.status .unit { margin: 0 12px; }
.status .times { margin-right: 13px; }

/* rail */
.rail { flex: 0 0 60px; background: #e8e8e8; display: flex; flex-direction: column; }
.fold { height: 44px; padding-bottom: 8px; }
.rail-on { height: 42px; margin-left: 6px; padding-right: 6px; background: #f4f4f8; }
.rail-off { height: 52px; }

/* side panel */
.side { flex: 0 0 363px; display: flex; flex-direction: column; overflow: hidden; }
.side-head { display: flex; justify-content: space-between; align-items: center; height: 41px; padding: 0 3px 0 14px; border-bottom: 1px solid #dcdce0; }
.side-tools { display: flex; align-items: center; gap: 15px; height: 38px; margin: 0 9px 0 15px; padding-left: 10px; border-bottom: 1px solid #e2e2e5; }
.bar { width: 1px; height: 24px; margin: 0 -4px; background: #d8d8dc; }
.tree { padding: 11px 0 45px 22px; color: #111; }
.tree li { display: flex; align-items: center; height: 27px; }
.tree .t0 { gap: 6px; height: 28px; }
.tree .t1 { gap: 7px; height: 30px; padding-left: 6px; }
.twig { margin-right: 6px; }
.tree .t2 { position: relative; gap: 4px; padding-left: 60px; }
.t2::before { content: ""; position: absolute; left: 43px; top: -14px; width: 14px; height: 27px; border: solid #e8e8eb; border-width: 0 0 1px 1px; }
.t2 span { padding: 2px; line-height: 23px; }
.t2 .picked { padding: 2px 4px 2px 2px; background: #429afa; color: #e6f2ff; }
.tabs-wrap { position: relative; }
.tabs { display: flex; height: 36px; }
.tabs button { flex: 1 0 123px; background: #d9dade; }
.tabs .tab-on { background: #f0f0f2; }
.props { display: flex; flex-direction: column; padding: 15px 12px 0 15px; }
.bar-title { display: flex; align-items: center; justify-content: space-between; height: 30px; padding: 0 9px 2px 7px; background: #ececec; }
.bar-title svg { margin-top: 8px; }
.check { display: flex; align-items: center; gap: 5px; height: 34px; padding-left: 13px; margin-bottom: 16px; }
.nav-check { margin-bottom: 55px; }
.check input { appearance: none; width: 20px; height: 20px; margin: 0; border: 1px solid #aaa; background: #f6f6f8; }
.check input:checked { border: 0; background: #3791ee; display: flex; justify-content: center; }
.check input:checked::before { content: ""; width: 6px; height: 12px; margin-top: 2px; border: solid #fff; border-width: 0 3px 3px 0; transform: rotate(40deg); }
.prop { display: grid; grid-template-columns: 118px 1fr; align-items: center; height: 30px; padding-left: 6px; margin: 10px 0 2px; }
.expand { margin: 21px 0 0; }
.combo { position: relative; }
.combo select { appearance: none; display: block; width: 100%; height: 30px; padding: 0 40px 0 10px; border: 1px solid #dcdce0; border-radius: 0; background: linear-gradient(to left, #d9dade 29px, #fff 29px); }
.combo > svg:not(.cursor) { position: absolute; right: 8px; top: 10px; color: #666; }
.menu { position: absolute; z-index: 1; left: 1px; right: 1px; top: 30px; background: #fff; border: 1px solid #e0e0e4; border-width: 0 1px; }
.menu li { height: 26px; line-height: 26px; padding-left: 10px; }
.menu .hot { background: #429afa; color: #e8f3ff; }
.cursor { position: absolute; z-index: 4; right: -3px; top: 73px; }
.hint { height: 36px; margin: 21px 0 7px; padding-left: 6px; line-height: 36px; color: #888; }
```
